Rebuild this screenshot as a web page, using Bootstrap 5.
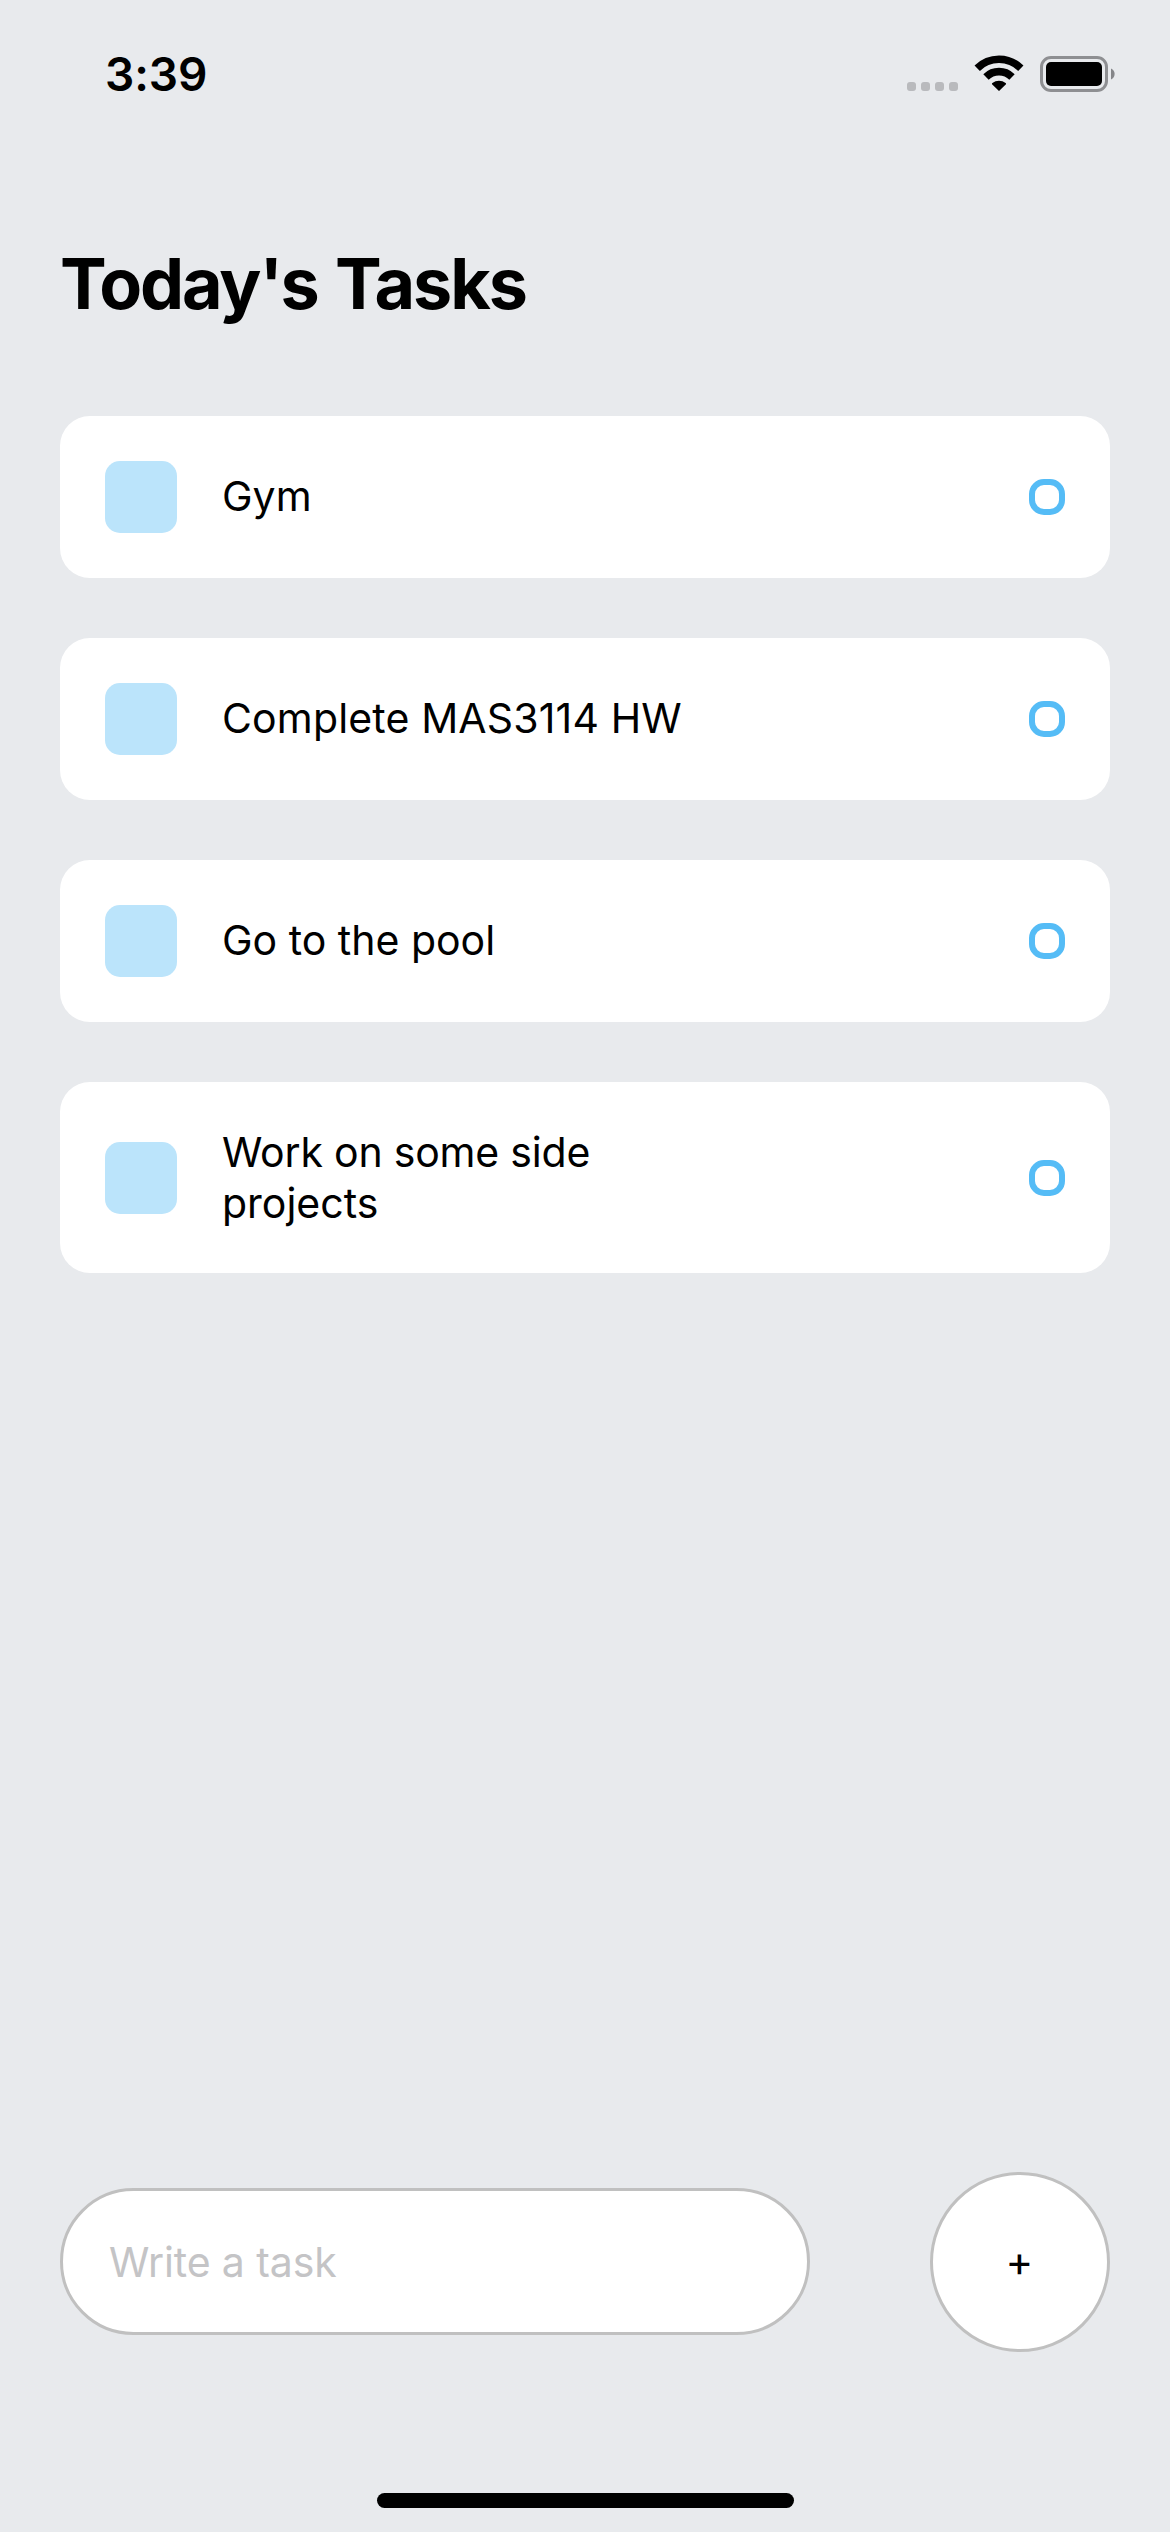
<!DOCTYPE html>
<html lang="en">
<head>
<meta charset="utf-8">
<meta name="viewport" content="width=device-width, initial-scale=1">
<title>Today's Tasks</title>
<link href="https://cdn.jsdelivr.net/npm/bootstrap@5.3.0/dist/css/bootstrap.min.css" rel="stylesheet">
<style>
  body { background: #e8eaed; color: #000; font-family: Inter, "Liberation Sans", sans-serif; font-size: 41px; }
  .screen { height: 2532px; }
  .status-bar { height: 141px; padding: 0 55px 0 105px; }
  .clock { font-size: 46px; font-weight: 600; line-height: 56px; margin-top: 46px; letter-spacing: -.1px; }
  .status-icons { margin-top: 55px; }
  .content { padding: 0 60px; }
  .title { font-size: 70px; font-weight: 700; line-height: 86px; margin: 100px 0 89px; letter-spacing: -2.1px; word-spacing: 3px; }
  .tasks { gap: 60px; }
  .task { padding: 45px; border-radius: 30px; }
  .tile { width: 72px; height: 72px; border-radius: 15px; background: #bbe4fb; margin-right: 45px; }
  .task-text { max-width: 480px; line-height: 50.5px; padding-bottom: 2px; }
  .two-line { padding-bottom: 0; }
  .tight { letter-spacing: -.2px; }
  .loose { letter-spacing: .15px; }
  .ring { width: 36px; height: 36px; border: 6px solid #55bcf6; border-radius: 15px; }
  .composer { padding: 0 60px; margin-bottom: 141px; }
  .task-input, .task-input:focus { width: 750px; height: 147px; margin-bottom: 1px; padding: 0 46px; border: 3px solid #c0c0c0; border-radius: 180px; background: #fff; font-size: 41px; line-height: 50px; letter-spacing: -.1px; box-shadow: none; }
  .task-input::placeholder { color: #c4c4c6; opacity: 1; }
  .add-btn { width: 180px; height: 180px; border: 3px solid #c0c0c0; font-size: 42px; line-height: 50px; padding: 0 1px 2px 0; --bs-btn-color: #000; --bs-btn-bg: #fff; }
  .home-bar { width: 417px; height: 15px; margin-bottom: 24px; }
</style>
</head>
<body>
<div class="screen d-flex flex-column overflow-hidden">
  <header class="status-bar d-flex justify-content-between align-items-start flex-shrink-0">
    <div class="clock">3:39</div>
    <svg class="status-icons" width="208" height="37" viewBox="0 0 208 37" aria-hidden="true">
      <g fill="#b9babd">
        <rect x="0" y="27" width="9" height="9" rx="3"/>
        <rect x="14" y="27" width="9" height="9" rx="3"/>
        <rect x="28" y="27" width="9" height="9" rx="3"/>
        <rect x="42" y="27" width="9" height="9" rx="3"/>
      </g>
      <g fill="none" stroke="#000" stroke-width="7.6">
        <path d="M70.2 13.2A31 31 0 0 1 113.8 13.2"/>
        <path d="M79 22A18.4 18.4 0 0 1 105 22"/>
      </g>
      <path d="M92 36L85 29.3Q84.7 28.6 85.4 28.1A10.4 10.4 0 0 1 98.6 28.1Q99.3 28.6 99 29.3Z"/>
      <rect x="134.5" y="2.5" width="65" height="33" rx="9.5" fill="none" stroke="#8e8f92" stroke-width="3"/>
      <rect x="139" y="7" width="56" height="24" rx="5"/>
      <path d="M204 13.5a6 6 0 0 1 0 11z" fill="#858689"/>
    </svg>
  </header>

  <main class="content flex-grow-1">
    <h1 class="title">Today's Tasks</h1>
    <div class="tasks d-flex flex-column">
      <div class="task bg-white d-flex align-items-center justify-content-between">
        <div class="d-flex align-items-center"><div class="tile flex-shrink-0"></div><div class="task-text">Gym</div></div>
        <div class="ring"></div>
      </div>
      <div class="task bg-white d-flex align-items-center justify-content-between">
        <div class="d-flex align-items-center"><div class="tile flex-shrink-0"></div><div class="task-text loose">Complete MAS3114 HW</div></div>
        <div class="ring"></div>
      </div>
      <div class="task bg-white d-flex align-items-center justify-content-between">
        <div class="d-flex align-items-center"><div class="tile flex-shrink-0"></div><div class="task-text">Go to the pool</div></div>
        <div class="ring"></div>
      </div>
      <div class="task bg-white d-flex align-items-center justify-content-between">
        <div class="d-flex align-items-center"><div class="tile flex-shrink-0"></div><div class="task-text two-line"><span class="tight">Work on some side</span> projects</div></div>
        <div class="ring"></div>
      </div>
    </div>
  </main>

  <form class="composer d-flex align-items-center justify-content-between flex-shrink-0">
    <input class="form-control task-input" type="text" placeholder="Write a task" aria-label="Write a task">
    <button class="btn add-btn rounded-circle" type="button" aria-label="Add task">+</button>
  </form>
  <div class="home-bar bg-black rounded-pill mx-auto flex-shrink-0"></div>
</div>
<script src="https://cdn.jsdelivr.net/npm/bootstrap@5.3.0/dist/js/bootstrap.bundle.min.js"></script>
</body>
</html>
